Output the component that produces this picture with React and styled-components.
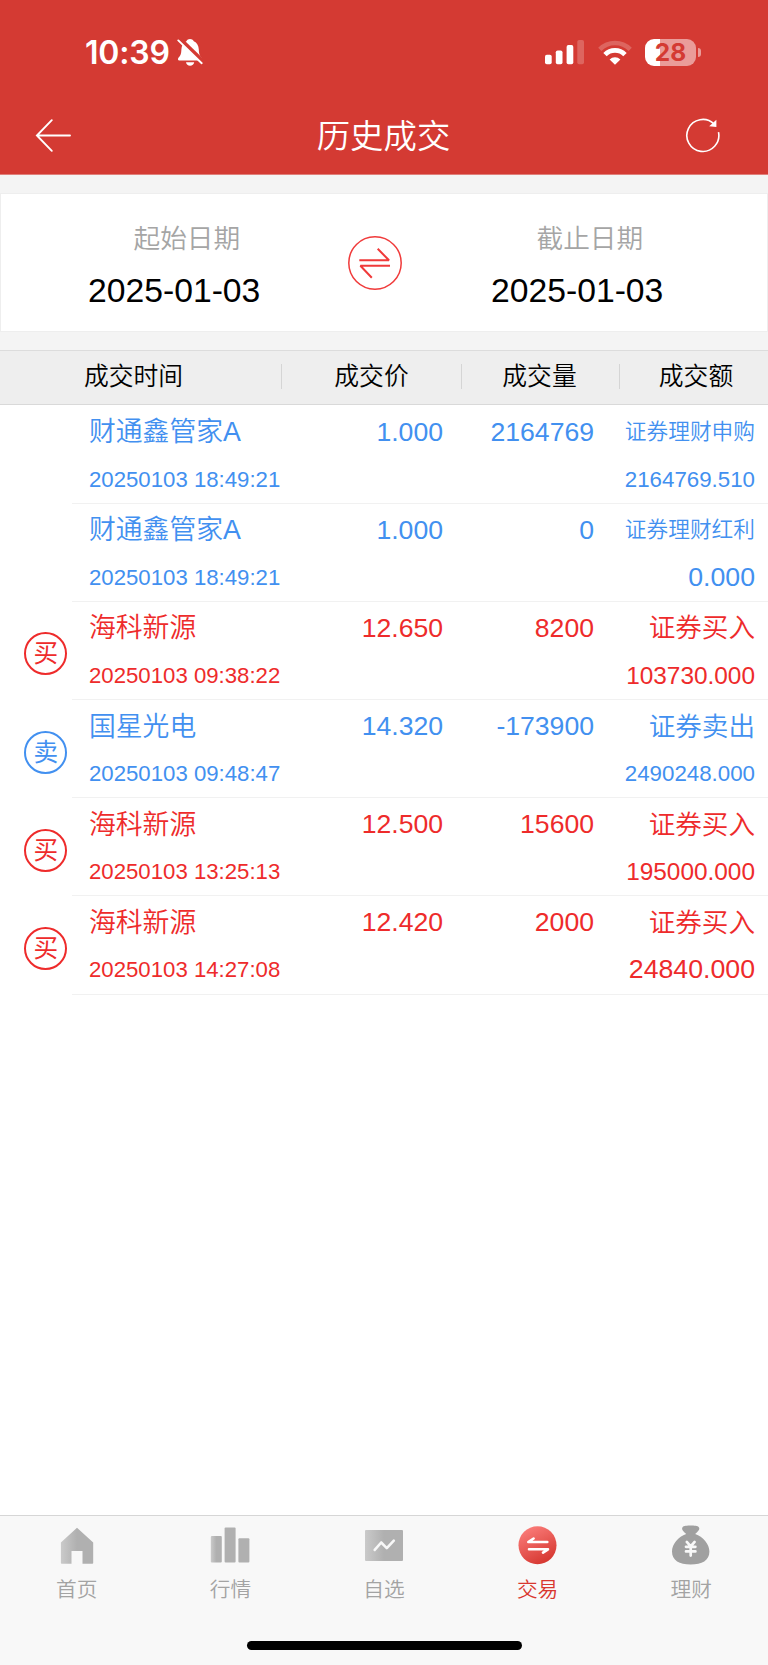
import React from 'react';
import styled, { createGlobalStyle } from 'styled-components';

const SANS = '"Liberation Sans", "Noto Sans CJK SC", sans-serif';
const BLUE = '#4290f0';
const RED = '#ee2b2b';

const GlobalStyle = createGlobalStyle`
  *, *::before, *::after { box-sizing: border-box; }
  body { margin: 0; background: #fff; }
  svg { display: block; flex: none; }
`;

const Screen = styled.div`
  width: 768px;
  height: 1665px;
  display: flex;
  flex-direction: column;
  background: #fff;
  font-family: ${SANS};
  font-weight: 350;
  overflow: hidden;
`;

const Header = styled.header`
  height: 175px;
  flex: none;
  background: #d43a33;
  border-bottom: 1px solid #e07f7a;
  color: #fff;
`;

const StatusBar = styled.div`
  height: 96px;
  padding: 8px 67px 0 85px;
  display: flex;
  align-items: center;
`;

const Clock = styled.span`
  width: 92px;
  padding-top: 2px;
  font: 600 32px/40px Inter, sans-serif;
  letter-spacing: -0.2px;
  white-space: nowrap;
`;

const StatusIcons = styled.div`
  margin-left: auto;
  display: flex;
  align-items: center;
  gap: 13.5px;
`;

const Battery = styled.div`
  display: flex;
  align-items: center;
  gap: 2px;
`;

const BatteryBody = styled.div`
  width: 51px;
  height: 27px;
  border-radius: 9px;
  background: linear-gradient(90deg, #fff 15px, #ea9c99 15px);
  color: #d43a33;
  font: 700 24.5px/27px Inter, sans-serif;
  text-align: center;
`;

const BatteryTip = styled.div`
  width: 3px;
  height: 9px;
  border-radius: 0 4px 4px 0;
  background: #ea9c99;
`;

const NavBar = styled.div`
  height: 78px;
  padding: 0 47px 0 35px;
  display: flex;
  align-items: center;
  justify-content: space-between;
`;

const NavButton = styled.button`
  width: 36px;
  height: 36px;
  padding: 0;
  border: 0;
  background: none;
  color: #fff;
`;

const Title = styled.h1`
  margin: 0 0 0 11px;
  padding-top: 3px;
  font-size: 33.4px;
  line-height: 44px;
  font-weight: 350;
`;

const DatePanel = styled.section`
  height: 175px;
  flex: none;
  padding: 18px 0;
  background: #f4f4f4;
`;

const DateCard = styled.div`
  height: 139px;
  border: 1px solid #eeeeee;
  background: #fff;
  display: grid;
  grid-template-columns: 347px 54px 1fr;
  align-items: center;
`;

const DateField = styled.div`
  padding: 11px 0 0 ${(p) => p.$inset}px;
  display: flex;
  flex-direction: column;
`;

const DateLabel = styled.span`
  padding-left: 45.5px;
  color: #a5a5a5;
  font-size: 26.7px;
  line-height: 44px;
`;

const DateValue = styled.span`
  color: #000;
  font-size: 33.7px;
  line-height: 58px;
`;

const TableHead = styled.div`
  height: 55px;
  flex: none;
  padding-bottom: 2px;
  display: grid;
  grid-template-columns: 282px 180px 158px 148px;
  align-items: center;
  background: #eeeeee;
  border-top: 1px solid #dcdcdc;
  border-bottom: 1px solid #d9d9d9;
`;

const HeadCell = styled.div`
  height: 25px;
  padding: 0 ${(p) => p.$right || 0}px 0 ${(p) => p.$left || 0}px;
  border-right: ${(p) => (p.$last ? '0' : '1px solid #d5d5d5')};
  text-align: center;
  color: #000;
  font-size: 24.8px;
  line-height: 25px;
`;

const List = styled.main`
  flex: 1;
  padding-top: 0.5px;
`;

const Row = styled.div`
  height: 98.2px;
  display: flex;
  color: ${(p) => p.$color};
`;

const BadgeCell = styled.div`
  width: 72px;
  padding: 6px 4px 0 24px;
  display: flex;
  align-items: center;
`;

const Badge = styled.div`
  width: 43px;
  height: 43px;
  border: 2px solid currentColor;
  border-radius: 50%;
  text-align: center;
  font-size: 24.6px;
  font-weight: 400;
  line-height: 40px;
  text-indent: 0.5px;
`;

const RowBody = styled.div`
  flex: 1;
  padding-left: 17px;
  border-bottom: 1px solid #f1f1f1;
  display: grid;
  grid-template-columns: 244px 110px 151px 161px;
`;

const Cell = styled.div`
  display: flex;
  flex-direction: column;
  text-align: ${(p) => (p.$end ? 'right' : 'left')};
  white-space: nowrap;
`;

const Primary = styled.span`
  padding-top: ${(p) => (p.$cjk ? 0.5 : 0)}px;
  font-size: ${(p) => p.$size || 26.6}px;
  line-height: 52px;
  height: 52px;
`;

const Time = styled.span`
  font-size: 22.2px;
  line-height: 44.6px;
`;

const Amount = styled.span`
  font-size: ${(p) => p.$size}px;
  line-height: 43px;
`;

const TabBar = styled.nav`
  height: 150px;
  flex: none;
  background: #f8f8f8;
  border-top: 1px solid #d6d6d6;
  display: flex;
  flex-direction: column;
`;

const Tabs = styled.div`
  height: 125px;
  display: grid;
  grid-template-columns: repeat(5, 1fr);
`;

const Tab = styled.div`
  padding-top: 9px;
  display: flex;
  flex-direction: column;
  align-items: center;
  color: ${(p) => (p.$active ? '#d8372f' : '#a3a3a3')};
  font-size: 20.7px;
  line-height: 28px;
  gap: 11px;
`;

const HomeIndicator = styled.div`
  width: 275px;
  height: 9px;
  margin: 0 auto;
  border-radius: 5px;
  background: #000;
`;

const MutedBell = () => (
  <svg width="26" height="28" viewBox="0 0 26 28">
    <path d="M13 1c-1.600 0-2.900.9-3.600 2.200C6.200 4.600 4.600 7.500 4.400 11.500c-.2 4.600-.9 6-2.600 7.800C.4 20.800.8 22.600 2.400 22.600h21.400c1.600 0 2-1.800.6-3.300-1.700-1.800-2.400-3.200-2.600-7.800-.2-4-1.800-6.900-5-8.300C16 1.900 14.600 1 13 1zM9 24.300h8.200c-.3 2-2 3.400-4.100 3.400s-3.800-1.400-4.100-3.400z" fill="#fff" />
    <path d="M2.400.6 27 24.600" stroke="#d43a33" strokeWidth="4.400" />
    <path d="M1.300 2.400 24.700 25.200" stroke="#fff" strokeWidth="1.900" strokeLinecap="round" />
  </svg>
);

const Signal = () => (
  <svg width="39" height="25" viewBox="0 0 39 25" fill="#fff">
    <rect x="0" y="14.700" width="6.700" height="9.600" rx="1.800" />
    <rect x="10.800" y="10.400" width="6.700" height="13.900" rx="1.800" />
    <rect x="21.600" y="5.100" width="6.700" height="19.200" rx="1.800" />
    <rect x="32.300" y="0" width="6.700" height="24.300" rx="1.800" opacity=".22" />
  </svg>
);

const Wifi = () => (
  <svg width="34" height="25" viewBox="0 0 34 25" fill="none" stroke="#fff">
    <path d="M1.800 9.300a21.500 21.500 0 0 1 30.400 0" strokeWidth="4.600" opacity=".22" />
    <path d="M7 14.600a14.100 14.100 0 0 1 20 0" strokeWidth="4.800" />
    <path d="M17 24.800 11.600 19.400a7.700 7.700 0 0 1 10.800 0z" fill="#fff" stroke="none" />
  </svg>
);

const BackArrow = () => (
  <svg width="36" height="36" viewBox="0 0 36 36" fill="none" stroke="currentColor" strokeWidth="1.900" strokeLinecap="round">
    <path d="M35 18.500H1.900M16.800 3.200 1.900 18.500 16.800 33.800" />
  </svg>
);

const Refresh = () => (
  <svg width="36" height="36" viewBox="0 0 36 36" fill="none" stroke="currentColor" strokeWidth="1.600">
    <path d="M33.500 15.200A16 16 0 1 1 29 7" />
    <path d="M31.400 2.800v7.200l-7.200-.8z" fill="currentColor" stroke="none" />
  </svg>
);

const SwapCircle = () => (
  <svg width="54" height="54" viewBox="0 0 54 54" fill="none" stroke="#f03a3a">
    <circle cx="27" cy="27" r="26.200" strokeWidth="1.500" />
    <path d="M11.300 24.300H41L29.700 12.800M42 29.800H12.400L23.800 41.800" strokeWidth="2" strokeLinejoin="bevel" />
  </svg>
);

const GreyGradient = ({ id }) => (
  <defs>
    <linearGradient id={id} x1="0" x2="1" y1="0" y2="0">
      <stop offset="0" stopColor="#cacaca" />
      <stop offset=".5" stopColor="#b0b0b0" />
    </linearGradient>
  </defs>
);

const HomeIcon = () => (
  <svg width="40" height="40" viewBox="0 0 40 40">
    <GreyGradient id="home" />
    <path d="M20 2.700 36.200 17.500v20.500a.8.800 0 0 1-.8.800H25.500V26h-11v12.800H4.700a.8.800 0 0 1-.8-.8V17.500z" fill="url(#home)" />
  </svg>
);

const BarsIcon = () => (
  <svg width="40" height="40" viewBox="0 0 40 40">
    <GreyGradient id="bar" />
    <rect x=".8" y="10.900" width="11" height="26.600" rx="1" fill="url(#bar)" />
    <rect x="14.600" y="2.500" width="11" height="35" rx="1" fill="#b0b0b0" />
    <rect x="28.400" y="13.200" width="11" height="24.300" rx="1" fill="#b0b0b0" />
  </svg>
);

const ChartIcon = () => (
  <svg width="40" height="40" viewBox="0 0 40 40">
    <GreyGradient id="chart" />
    <rect x="1" y="5" width="38" height="31" rx="1" fill="url(#chart)" />
    <path d="M10.700 24.900 17.200 17.500l5.600 5.600 7-7.400" fill="none" stroke="#f8f8f8" strokeWidth="2.600" strokeLinecap="round" strokeLinejoin="round" />
  </svg>
);

const TradeIcon = () => (
  <svg width="40" height="40" viewBox="0 0 40 40">
    <defs>
      <linearGradient id="trade" x1=".25" x2=".75" y1="0" y2="1">
        <stop offset="0" stopColor="#fb7d7a" />
        <stop offset="1" stopColor="#d4342d" />
      </linearGradient>
    </defs>
    <circle cx="19.500" cy="20.200" r="19" fill="url(#trade)" />
    <path d="M29.300 17H10.300l5.300-3.500M11 24.300h19l-5 3.300" fill="none" stroke="#fff" strokeWidth="2.600" strokeLinecap="round" strokeLinejoin="round" />
  </svg>
);

const MoneyBagIcon = () => (
  <svg width="40" height="40" viewBox="0 0 40 40">
    <path d="M15.200 9C12.400 6.600 10.300 4.200 11.400 2.500 12.600.7 16.300.6 19.700.6s7.100.1 8.300 1.900c1.100 1.700-1 4.100-3.800 6.500C32 11.600 38.400 19 38.400 26.600 38.400 35.600 31 39.600 19.700 39.600S1 35.600 1 26.600C1 19 7.400 11.600 15.200 9z" fill="#a0a0a0" />
    <path d="M15.800 16.900 19.700 21.400l3.900-4.500M19.700 21.400v9.200M15 21.800h9.400M15 26.400h9.400" fill="none" stroke="#f8f8f8" strokeWidth="2.700" strokeLinecap="round" />
  </svg>
);

const trades = [
  { name: '财通鑫管家A', time: '20250103 18:49:21', price: '1.000', volume: '2164769', kind: '证券理财申购', kindSize: 21.7, amount: '2164769.510', amountSize: 22.3, color: BLUE },
  { name: '财通鑫管家A', time: '20250103 18:49:21', price: '1.000', volume: '0', kind: '证券理财红利', kindSize: 21.7, amount: '0.000', amountSize: 26.7, color: BLUE },
  { name: '海科新源', time: '20250103 09:38:22', price: '12.650', volume: '8200', kind: '证券买入', amount: '103730.000', amountSize: 24.4, color: RED, badge: '买' },
  { name: '国星光电', time: '20250103 09:48:47', price: '14.320', volume: '-173900', kind: '证券卖出', amount: '2490248.000', amountSize: 22.3, color: BLUE, badge: '卖' },
  { name: '海科新源', time: '20250103 13:25:13', price: '12.500', volume: '15600', kind: '证券买入', amount: '195000.000', amountSize: 24.4, color: RED, badge: '买' },
  { name: '海科新源', time: '20250103 14:27:08', price: '12.420', volume: '2000', kind: '证券买入', amount: '24840.000', amountSize: 26.7, color: RED, badge: '买' },
];

const tabs = [
  { label: '首页', Icon: HomeIcon },
  { label: '行情', Icon: BarsIcon },
  { label: '自选', Icon: ChartIcon },
  { label: '交易', Icon: TradeIcon, active: true },
  { label: '理财', Icon: MoneyBagIcon },
];

const TradeRow = ({ trade }) => (
  <Row $color={trade.color}>
    <BadgeCell>{trade.badge && <Badge>{trade.badge}</Badge>}</BadgeCell>
    <RowBody>
      <Cell>
        <Primary $cjk $size={26.8}>{trade.name}</Primary>
        <Time>{trade.time}</Time>
      </Cell>
      <Cell $end>
        <Primary>{trade.price}</Primary>
      </Cell>
      <Cell $end>
        <Primary>{trade.volume}</Primary>
      </Cell>
      <Cell $end>
        <Primary $cjk $size={trade.kindSize}>{trade.kind}</Primary>
        <Amount $size={trade.amountSize}>{trade.amount}</Amount>
      </Cell>
    </RowBody>
  </Row>
);

export default function App() {
  return (
    <Screen>
      <GlobalStyle />
      <Header>
        <StatusBar>
          <Clock>10:39</Clock>
          <MutedBell />
          <StatusIcons>
            <Signal />
            <Wifi />
            <Battery>
              <BatteryBody>28</BatteryBody>
              <BatteryTip />
            </Battery>
          </StatusIcons>
        </StatusBar>
        <NavBar>
          <NavButton aria-label="返回"><BackArrow /></NavButton>
          <Title>历史成交</Title>
          <NavButton aria-label="刷新"><Refresh /></NavButton>
        </NavBar>
      </Header>
      <DatePanel>
        <DateCard>
          <DateField $inset={87}>
            <DateLabel>起始日期</DateLabel>
            <DateValue>2025-01-03</DateValue>
          </DateField>
          <SwapCircle />
          <DateField $inset={89}>
            <DateLabel>截止日期</DateLabel>
            <DateValue>2025-01-03</DateValue>
          </DateField>
        </DateCard>
      </DatePanel>
      <TableHead>
        <HeadCell $right={14}>成交时间</HeadCell>
        <HeadCell>成交价</HeadCell>
        <HeadCell $right={2}>成交量</HeadCell>
        <HeadCell $last $left={4}>成交额</HeadCell>
      </TableHead>
      <List>
        {trades.map((trade, i) => (
          <TradeRow key={i} trade={trade} />
        ))}
      </List>
      <TabBar>
        <Tabs>
          {tabs.map(({ label, Icon, active }) => (
            <Tab key={label} $active={active}>
              <Icon />
              {label}
            </Tab>
          ))}
        </Tabs>
        <HomeIndicator />
      </TabBar>
    </Screen>
  );
}
